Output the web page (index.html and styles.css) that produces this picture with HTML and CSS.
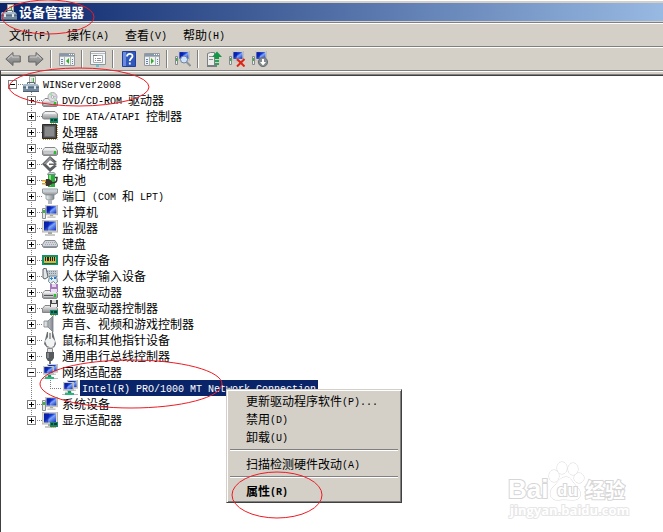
FILE: index.html
```html
<!DOCTYPE html>
<html lang="zh-CN">
<head>
<meta charset="utf-8">
<title>设备管理器</title>
<link rel="stylesheet" href="styles.css">
</head>
<body>
<svg class="defs" aria-hidden="true">
  <defs>
    <linearGradient id="blue" x1="0" y1="0" x2="1" y2="1"><stop offset="0" stop-color="#0a1fa8"/><stop offset=".4" stop-color="#1238d8"/><stop offset=".55" stop-color="#7fa4f4"/><stop offset="1" stop-color="#0c2ac0"/></linearGradient>
    <linearGradient id="metal" x1="0" y1="0" x2="0" y2="1"><stop offset="0" stop-color="#f4f4f4"/><stop offset="1" stop-color="#8c8f92"/></linearGradient>
    <linearGradient id="steel" x1="0" y1="0" x2="1" y2="0"><stop offset="0" stop-color="#f2f4f5"/><stop offset="1" stop-color="#7d858c"/></linearGradient>
    <linearGradient id="arrow" x1="0" y1="0" x2="0" y2="1"><stop offset="0" stop-color="#b8b8b8"/><stop offset="1" stop-color="#777"/></linearGradient>
  </defs>
  <symbol id="root" viewBox="0 0 16 16">
    <path d="M6.500.500h6v9h-6z" fill="#f1f1ee" stroke="#a5a5a0"/><path d="M8 2h3v5H8z" fill="#d4d6d8"/><path d="M10 2h1v4h-1z" fill="#43b843"/>
    <path d="M4.500 8V6.500h7V8" fill="none" stroke="#536a78"/>
    <path d="M1 8h13l2 2v6H0v-6z" fill="#7389a0"/><path d="M1 8h13l1 2H0z" fill="#a9bac8"/><path d="M0 11h16v1H0z" fill="#566b7c"/><path d="M3 10h2v3H3zM11 10h2v3h-2z" fill="#dce5ea"/><path d="M0 15h16v1H0z" fill="#4e6070"/>
  </symbol>
  <symbol id="drive" viewBox="0 0 16 16">
    <path d="M3 6.500h10l2.500 3v4l-1 1h-13l-1-1v-4z" fill="url(#metal)" stroke="#858585"/><path d="M3 7h10l2 2.500H1z" fill="#eceeef"/><path d="M2 11h9v2H2z" fill="#c7c9ca"/><path d="M12 10h2v3h-2z" fill="#25c225"/>
  </symbol>
  <symbol id="chip" viewBox="0 0 16 16"><path d="M8 10h8v5H8z" fill="#16866a"/><path d="M9 11h2v2H9zM12 11h3v2h-3z" fill="#083c36"/><path d="M9 15h1v1H9zM11 15h1v1h-1zM13 15h1v1h-1z" fill="#e2b02c"/></symbol>
  <symbol id="dvd" viewBox="0 0 16 16"><use href="#drive"/><circle cx="10.500" cy="5" r="4.500" fill="#dedfe3" stroke="#aaa"/><path d="M10.500 5L7 2l3-1.400zM10.500 5l4 2-1 1.500z" fill="#a6dca9"/><path d="M10 5l5-2 .2 2z" fill="#d5b5e5"/><circle cx="10.500" cy="5" r="1.300" fill="#fff" stroke="#888" stroke-width=".6"/></symbol>
  <symbol id="ide" viewBox="0 0 16 16"><path d="M3 3.500h10l2.500 2.500v4l-1 1h-13l-1-1V6z" fill="url(#metal)" stroke="#85888a"/><path d="M2 6h12L12.500 4h-9z" fill="#f0f0f0"/><use href="#chip"/></symbol>
  <symbol id="cpu" viewBox="0 0 16 16"><path d="M1 15.500h14.500V1" fill="none" stroke="#c79a38" stroke-dasharray="1 1"/><path d="M.5.500h14v14H.5z" fill="#4a4b4c" stroke="#2c2c2c"/><path d="M2.500 2.500h10v10h-10z" fill="#87898b" stroke="#6a6c6d"/></symbol>
  <symbol id="disk" viewBox="0 0 16 16"><use href="#drive" y="1"/></symbol>
  <symbol id="storage" viewBox="0 0 16 16"><path d="M8 0l7 6-3 1-4-3-4 4 4 4 4-3 3 1-7 6-8-8z" fill="#5b5d5f"/><path d="M8 1L1.500 8H4l4-4.500 4 2.500z" fill="#929496"/><path d="M7 7.500h5V6l3 2-3 2.500V9H7z" fill="#666"/></symbol>
  <symbol id="battery" viewBox="0 0 16 16"><path d="M6 2h7v13H6z" fill="#2cab3e"/><path d="M7 3h2v11H7z" fill="#83e276"/><path d="M5.500 2.500c0-3 8-3 8 0z" fill="#c9d2d9" stroke="#66727a" stroke-width=".7"/><path d="M4 7h3l3 2v3l-3 2H4L3 11z" fill="#3b3330"/><path d="M0 8h4v1.500H0zM0 11h4v1.500H0z" fill="#dd9f24"/><path d="M9 10.500c5 1 6-1 6-5h-2" fill="none" stroke="#343434" stroke-width="1.500"/></symbol>
  <symbol id="port" viewBox="0 0 16 16"><path d="M.5 1h15v4L12 7H4L.5 5z" fill="url(#metal)" stroke="#8b959c"/><path d="M2 2h12v2H2z" fill="#c6ced4"/><path d="M4 7h8v4l-2 1H6l-2-1z" fill="url(#steel)" stroke="#7d878e" stroke-width=".7"/><path d="M6 12h4v4H6z" fill="#b3bbc0"/></symbol>
  <symbol id="monitor" viewBox="0 0 16 16"><path d="M0 0h16v12.500H0z" fill="#b4b3aa"/><path d="M.5.500h14.500v11H.5z" fill="#dedcd2"/><path d="M2 1.500h12v9H2z" fill="url(#blue)"/><path d="M2 1.500h5l-1 9H2z" fill="#081b9c" opacity=".6"/><path d="M6 12h4v2H6z" fill="#a7a8a5"/><path d="M3 14h10v2H3z" fill="#c9cac5"/></symbol>
  <symbol id="computer" viewBox="0 0 16 16"><svg x="3" y="1" width="13" height="13"><use href="#monitor"/></svg><path d="M.5 4.500h3v10h-3z" fill="#e7e9e9" stroke="#8b9192"/><path d="M1 6h2v3H1z" fill="#33ba38"/></symbol>
  <symbol id="keyboard" viewBox="0 0 16 16"><path d="M3 4.500h10l2.500 4v2l-1 1h-13l-1-1v-2z" fill="#d1d4d8" stroke="#858a92"/><path d="M4 6.500h9M3 8.500h11" stroke="#a3a8b0" stroke-dasharray="1 1"/><path d="M1 10.500h14" stroke="#9398a0"/></symbol>
  <symbol id="memory" viewBox="0 0 16 16"><path d="M0 3h16v10H0z" fill="#139468"/><path d="M2 5h12v6H2z" fill="#d4b83c"/><path d="M3 5h1v4H3zM5 5h2v4H5zM8 5h1v4H8zM10 5h1v4h-1zM12 5h1v4h-1z" fill="#252018"/><path d="M2 11h12v1H2z" fill="#0c6a4c"/></symbol>
  <symbol id="hid" viewBox="0 0 16 16"><path d="M4 2h12v7H4z" fill="#c2cad0"/><path d="M5 3.500h10M5 5.500h10" stroke="#7f8b94" stroke-dasharray="1 1"/><path d="M1 1l3-1 2 9-3 2-2-1z" fill="#e2e5e7" stroke="#5a6267"/><path d="M7.500 8h7l1 6-2 1.500-2-2-3 2-2-2z" fill="#e3edf3" stroke="#6f8490"/><path d="M8 10h3v1H8zM9 9h1v3H9z" fill="#2889c5"/><path d="M12 9h2v2h-2z" fill="#2774d8"/></symbol>
  <symbol id="floppy" viewBox="0 0 16 16"><use href="#drive"/><path d="M8 0h8v8H8z" fill="#a77abb"/><path d="M10 0h4v3h-4z" fill="#e4d5ea"/><path d="M9 5h6v3H9z" fill="#e8dff0"/><path d="M2 11h9v1H2z" fill="#555"/></symbol>
  <symbol id="floppyc" viewBox="0 0 16 16"><path d="M3 5.500h10l2.500 3v4h-15v-4z" fill="url(#metal)" stroke="#858585"/><path d="M8 0h8v7H8z" fill="#494949"/><path d="M10 0h4v3h-4z" fill="#ddd"/><path d="M9 4h6v3H9z" fill="#eee"/><use href="#chip"/></symbol>
  <symbol id="sound" viewBox="0 0 16 16"><path d="M2 5h4l5-5v16l-5-5H2z" fill="url(#steel)" stroke="#788087" stroke-width=".8"/><path d="M6 5v6" stroke="#858c92"/></symbol>
  <symbol id="mouse" viewBox="0 0 16 16"><path d="M5 0h6l3 12-2 3.500H5L2 12z" fill="#6a6f72"/><path d="M6 0h4v5l3 4-1 5-3 1.500L5 14 3 9l3-4z" fill="#f2f3f3"/><path d="M8 1v6" stroke="#555"/></symbol>
  <symbol id="usb" viewBox="0 0 16 16"><path d="M5.500.500h5v4h-5z" fill="#e4e4e4" stroke="#888"/><path d="M4 4h8v6l-2 3H6l-2-3z" fill="#565a5d"/><path d="M5 5h2v5H5z" fill="#85898c"/><path d="M7 13h2v3H7z" fill="#777"/></symbol>
  <symbol id="network" viewBox="0 0 16 16"><svg x="5" y="0" width="11" height="11"><use href="#monitor"/></svg><svg x="1" y="2" width="11" height="11"><use href="#monitor"/></svg><path d="M6 11h3v3H6z" fill="#129965"/><path d="M3 13h9v2H3z" fill="#28b77d"/><path d="M0 14h3v1H0zM12 14h4v1h-4z" fill="#b7bbc0"/></symbol>
  <symbol id="display" viewBox="0 0 16 16"><use href="#monitor"/><use href="#chip"/></symbol>
  <symbol id="back" viewBox="0 0 16 16"><path d="M.8 8L8 1.500V5h7.300v6H8v3.500z" fill="url(#arrow)" stroke="#666"/><path d="M3 7.500L7 4v2h7" fill="none" stroke="#ccc"/></symbol>
  <symbol id="pane" viewBox="0 0 16 16"><path d="M.5 2.500h15v12H.5z" fill="#f2f2ee" stroke="#9299a0"/><path d="M1 3h14v2H1z" fill="#8898ab"/><path d="M10 3h1v1h-1zM12 3h1v1h-1zM14 3h1v1h-1z" fill="#fff"/><path d="M1 5.500h14M5.500 6v8M11.500 6v8" stroke="#adb4bb"/><path d="M2 8h2v1H2zM2 10h2v1H2zM2 12h2v1H2zM13 8h1v1h-1zM13 10h1v1h-1zM13 12h1v1h-1z" fill="#6284b3"/></symbol>
  <symbol id="tree" viewBox="0 0 16 16"><use href="#pane"/><path d="M10 7v6L7 10z" fill="#2caf26"/></symbol>
  <symbol id="action" viewBox="0 0 16 16"><use href="#pane"/><path d="M7 7v6l3-3z" fill="#2caf26"/></symbol>
  <symbol id="props" viewBox="0 0 16 16"><path d="M.5.500h15v13H.5z" fill="#f5f5f3" stroke="#8f969d"/><path d="M1 2.500h14" stroke="#b5bbc1"/><path d="M3.500 4.500h9v7h-9z" fill="#fff" stroke="#a4abb1"/><path d="M3 4.500h4" stroke="#777"/><path d="M5 7.500h1M7 7.500h4M5 9.500h1M7 9.500h4" stroke="#8a929b"/><path d="M6 14h3v2H6z" fill="#61c5da"/><path d="M10 14h4v2h-4z" fill="#c7cacc"/></symbol>
  <symbol id="help" viewBox="0 0 16 16"><path d="M1.500.500h13v15h-13z" fill="#3159bd" stroke="#203f99"/><path d="M2 1h3v14H2z" fill="#6b8cdd"/><path d="M6 5.500C6 2 11.500 2 11.500 5.200c0 2-2.700 2.200-2.700 4.800M8.800 11.500v2" fill="none" stroke="#fff" stroke-width="1.800"/></symbol>
  <symbol id="pc" viewBox="0 0 16 16"><svg x="3" y="0" width="12" height="12"><use href="#monitor"/></svg><path d="M.5 5.500h2v8h-2z" fill="#eee" stroke="#858a8d"/><path d="M1 7h1v3H1z" fill="#2eb635"/></symbol>
  <symbol id="scan" viewBox="0 0 16 16"><use href="#pc"/><circle cx="9" cy="8.500" r="3.500" fill="#cfe2fb" stroke="#70849d"/><path d="M11.500 11l4 4" stroke="#8d949b" stroke-width="2"/></symbol>
  <symbol id="update" viewBox="0 0 16 16"><path d="M1.500 2.500l3-1h4v13h-7z" fill="#ececea" stroke="#7b8083"/><path d="M3 5.500h4M3 8.500h4" stroke="#8a9093"/><path d="M1 14h10v2H1z" fill="#777f82"/><path d="M11 .5L16 6h-3v2H9V6H6z" fill="#169748"/><path d="M9 9h4v2H9zM9 12h4v2H9z" fill="#2ca45a"/></symbol>
  <symbol id="remove" viewBox="0 0 16 16"><use href="#pc"/><path d="M8 8l7.500 7.500M15.500 8L8 15.500" stroke="#e22414" stroke-width="2"/></symbol>
  <symbol id="disable" viewBox="0 0 16 16"><use href="#pc"/><circle cx="11" cy="11" r="4.600" fill="#858b90" stroke="#696f73"/><path d="M10 8h2v3h2l-3 3.500L8 11h2z" fill="#fff"/></symbol>
</svg>

<main class="window">
  <header class="titlebar"><svg class="icon"><use href="#root"/></svg><h1>设备管理器</h1></header>
  <nav class="menubar">
    <button>文件<span class="en">(F)</span></button><button>操作<span class="en">(A)</span></button><button>查看<span class="en">(V)</span></button><button>帮助<span class="en">(H)</span></button>
  </nav>
  <div class="toolbar">
    <button aria-label="后退"><svg class="icon"><use href="#back"/></svg></button>
    <button aria-label="前进"><svg class="icon flip"><use href="#back"/></svg></button>
    <i class="sep"></i>
    <button aria-label="显示控制台树"><svg class="icon"><use href="#tree"/></svg></button>
    <i class="sep"></i>
    <button aria-label="属性"><svg class="icon"><use href="#props"/></svg></button>
    <i class="sep"></i>
    <button aria-label="帮助"><svg class="icon"><use href="#help"/></svg></button>
    <button aria-label="操作窗格"><svg class="icon"><use href="#action"/></svg></button>
    <i class="sep"></i>
    <button aria-label="扫描"><svg class="icon"><use href="#scan"/></svg></button>
    <i class="sep"></i>
    <button aria-label="更新"><svg class="icon"><use href="#update"/></svg></button>
    <button aria-label="卸载"><svg class="icon"><use href="#remove"/></svg></button>
    <button aria-label="禁用"><svg class="icon"><use href="#disable"/></svg></button>
  </div>
  <section class="content">
    <div class="row"><button class="toggle open" aria-label="折叠"></button><i class="dots"></i><svg class="icon"><use href="#root"/></svg><span class="label"><span class="en">WINServer2008</span></span></div>
    <ul class="tree">
      <li class="row"><button class="toggle" aria-label="展开"></button><i class="dots"></i><svg class="icon"><use href="#dvd"/></svg><span class="label"><span class="en">DVD/CD-ROM </span>驱动器</span></li>
      <li class="row"><button class="toggle" aria-label="展开"></button><i class="dots"></i><svg class="icon"><use href="#ide"/></svg><span class="label"><span class="en">IDE ATA/ATAPI </span>控制器</span></li>
      <li class="row"><button class="toggle" aria-label="展开"></button><i class="dots"></i><svg class="icon"><use href="#cpu"/></svg><span class="label">处理器</span></li>
      <li class="row"><button class="toggle" aria-label="展开"></button><i class="dots"></i><svg class="icon"><use href="#disk"/></svg><span class="label">磁盘驱动器</span></li>
      <li class="row"><button class="toggle" aria-label="展开"></button><i class="dots"></i><svg class="icon"><use href="#storage"/></svg><span class="label">存储控制器</span></li>
      <li class="row"><button class="toggle" aria-label="展开"></button><i class="dots"></i><svg class="icon"><use href="#battery"/></svg><span class="label">电池</span></li>
      <li class="row"><button class="toggle" aria-label="展开"></button><i class="dots"></i><svg class="icon"><use href="#port"/></svg><span class="label">端口<span class="en"> (COM </span>和<span class="en"> LPT)</span></span></li>
      <li class="row"><button class="toggle" aria-label="展开"></button><i class="dots"></i><svg class="icon"><use href="#computer"/></svg><span class="label">计算机</span></li>
      <li class="row"><button class="toggle" aria-label="展开"></button><i class="dots"></i><svg class="icon"><use href="#monitor"/></svg><span class="label">监视器</span></li>
      <li class="row"><button class="toggle" aria-label="展开"></button><i class="dots"></i><svg class="icon"><use href="#keyboard"/></svg><span class="label">键盘</span></li>
      <li class="row"><button class="toggle" aria-label="展开"></button><i class="dots"></i><svg class="icon"><use href="#memory"/></svg><span class="label">内存设备</span></li>
      <li class="row"><button class="toggle" aria-label="展开"></button><i class="dots"></i><svg class="icon"><use href="#hid"/></svg><span class="label">人体学输入设备</span></li>
      <li class="row"><button class="toggle" aria-label="展开"></button><i class="dots"></i><svg class="icon"><use href="#floppy"/></svg><span class="label">软盘驱动器</span></li>
      <li class="row"><button class="toggle" aria-label="展开"></button><i class="dots"></i><svg class="icon"><use href="#floppyc"/></svg><span class="label">软盘驱动器控制器</span></li>
      <li class="row"><button class="toggle" aria-label="展开"></button><i class="dots"></i><svg class="icon"><use href="#sound"/></svg><span class="label">声音、视频和游戏控制器</span></li>
      <li class="row"><button class="toggle" aria-label="展开"></button><i class="dots"></i><svg class="icon"><use href="#mouse"/></svg><span class="label">鼠标和其他指针设备</span></li>
      <li class="row"><button class="toggle" aria-label="展开"></button><i class="dots"></i><svg class="icon"><use href="#usb"/></svg><span class="label">通用串行总线控制器</span></li>
      <li class="row"><button class="toggle open" aria-label="折叠"></button><i class="dots"></i><svg class="icon"><use href="#network"/></svg><span class="label">网络适配器</span></li>
      <li class="row leaf"><i class="elbow"></i><svg class="icon"><use href="#network"/></svg><span class="label selected"><span class="en">Intel(R) PRO/1000 MT Network Connection</span></span></li>
      <li class="row"><button class="toggle" aria-label="展开"></button><i class="dots"></i><svg class="icon"><use href="#computer"/></svg><span class="label">系统设备</span></li>
      <li class="row last"><button class="toggle" aria-label="展开"></button><i class="dots"></i><svg class="icon"><use href="#display"/></svg><span class="label">显示适配器</span></li>
    </ul>
  </section>
</main>

<div class="context-menu">
  <button>更新驱动程序软件<span class="en">(P)...</span></button>
  <button>禁用<span class="en">(D)</span></button>
  <button>卸载<span class="en">(U)</span></button>
  <hr>
  <button>扫描检测硬件改动<span class="en">(A)</span></button>
  <hr>
  <button class="default">属性<span class="en">(R)</span></button>
</div>

<svg class="watermark" viewBox="0 0 124 62">
  <g class="paw"><ellipse cx="46" cy="17" rx="5" ry="6"/><ellipse cx="54" cy="9" rx="5" ry="6"/><ellipse cx="65" cy="10" rx="5" ry="6"/><ellipse cx="71" cy="19" rx="5" ry="5"/><path d="M58 18c5 0 6 5 11 10 6 6 4 13-4 13-5 0-9-1-14 0-9 1-11-7-6-13 5-4 7-10 13-10z"/></g>
  <text class="brand" x="0" y="39">Bai</text><text class="du" x="49" y="37">du</text><text class="exp" x="77" y="39">经验</text>
  <text class="url" x="2" y="56">jingyan.baidu.com</text>
</svg>

<svg class="marks" viewBox="0 0 663 532" aria-hidden="true">
  <ellipse cx="48" cy="17" rx="46" ry="17"/><ellipse cx="79" cy="87" rx="70" ry="19"/><ellipse cx="131" cy="384" rx="91" ry="24"/><ellipse cx="277" cy="495" rx="45" ry="23"/>
</svg>
</body>
</html>
```
FILE: styles.css
```css
* { box-sizing: border-box; }
body {
  margin: 0;
  min-height: 100vh;
  position: relative;
  overflow: hidden;
  background: #d4d0c8;
  color: #000;
  font: 12px/16px "Noto Sans CJK SC", sans-serif;
}
button {
  margin: 0;
  padding: 0;
  border: 0;
  background: none;
  color: inherit;
  font: inherit;
}
.defs { position: absolute; width: 0; height: 0; }
.en {
  font-family: "Liberation Mono", monospace;
  font-size: 10px;
  line-height: 1;
  vertical-align: 1px;
  white-space: pre;
}
.icon { display: block; flex: none; width: 16px; height: 16px; }
.flip { transform: scaleX(-1); }

.window {
  display: flex;
  flex-direction: column;
  min-height: 100vh;
  border-top: 1px solid #fff;
}
.titlebar {
  display: flex;
  align-items: center;
  gap: 2px;
  height: 21px;
  padding-left: 1px;
  border-top: 2px solid #d4d0c8;
  border-bottom: 1px solid #d4d0c8;
  background: linear-gradient(90deg, #0a246a, #98b9e2);
}
.titlebar h1 { margin: 0; color: #fff; font-size: 13px; line-height: 18px; }
.menubar, .toolbar {
  display: flex;
  align-items: center;
  height: 24px;
  padding-left: 1px;
  border-top: 1px solid #808080;
  box-shadow: inset 0 1px #fff;
}
.menubar button { height: 22px; padding: 0 8px; }
.toolbar button { display: grid; place-items: center; width: 23px; height: 22px; }
.sep {
  width: 2px;
  height: 18px;
  margin: 0 3px;
  border-left: 1px solid #808080;
  border-right: 1px solid #fff;
}
.content {
  flex: 1;
  border-top: 1px solid #808080;
  border-left: 1px solid #404040;
  background: linear-gradient(#fff 0 1px, #d4d0c8 1px 3px, #808080 3px 4px, #404040 4px 5px, #fff 5px);
  padding: 5px 0 0 7px;
}
.tree { margin: 0; padding: 0 0 0 19px; list-style: none; }
.row { display: flex; align-items: center; height: 16px; white-space: nowrap; }
.tree .row { background: repeating-linear-gradient(#808080 0 1px, transparent 1px 2px) 4px 0 / 1px 16px no-repeat; }
.tree .last { background-size: 1px 8px; }
.toggle {
  flex: none;
  width: 9px;
  height: 9px;
  border: 1px solid #808080;
  background:
    linear-gradient(#000, #000) center / 5px 1px no-repeat,
    linear-gradient(#000, #000) center / 1px 5px no-repeat,
    #fff;
}
.toggle.open { background: linear-gradient(#000, #000) center / 5px 1px no-repeat, #fff; }
.dots { width: 6px; height: 1px; background: repeating-linear-gradient(90deg, transparent 0 1px, #808080 1px 2px); }
.leaf { padding-left: 23px; }
.elbow {
  width: 12px;
  height: 16px;
  background:
    repeating-linear-gradient(#808080 0 1px, transparent 1px 2px) 0 0 / 1px 8px no-repeat,
    repeating-linear-gradient(90deg, #808080 0 1px, transparent 1px 2px) 0 8px / 12px 1px no-repeat;
}
.label { margin-left: 2px; padding: 0 2px; height: 16px; }
.selected { background: #0a246a; color: #fff; }

.context-menu {
  position: absolute;
  left: 226px;
  top: 389px;
  width: 176px;
  padding: 2px 3px;
  border: 1px solid;
  border-color: #d4d0c8 #404040 #404040 #d4d0c8;
  box-shadow: inset 1px 1px #fff, inset -1px -1px #808080;
  background: #d4d0c8;
}
.context-menu button { display: block; width: 100%; height: 18px; padding-left: 16px; text-align: left; }
.context-menu .default { font-weight: bold; }
.context-menu hr { height: 2px; margin: 3px 0 4px; border: 0; border-top: 1px solid #808080; border-bottom: 1px solid #fff; }

.watermark { position: absolute; right: 31px; bottom: 11px; width: 124px; height: 62px; overflow: visible; }
.watermark text, .paw { fill: #fff; stroke: #d6d6d6; stroke-width: 2px; paint-order: stroke; }
.paw { stroke-width: 1px; }
.brand { font: bold 26px "Liberation Sans", sans-serif; }
.du { font: bold 17px "Liberation Sans", sans-serif; }
.exp { font: bold 20px "Noto Sans CJK SC", sans-serif; }
.url { font: bold 13px "Open Sans", sans-serif; }
.watermark .url { stroke: #e6e6e6; }
.marks {
  position: absolute;
  left: 0;
  top: 0;
  width: 663px;
  height: 532px;
  fill: none;
  stroke: #ed1c24;
  pointer-events: none;
}
```
